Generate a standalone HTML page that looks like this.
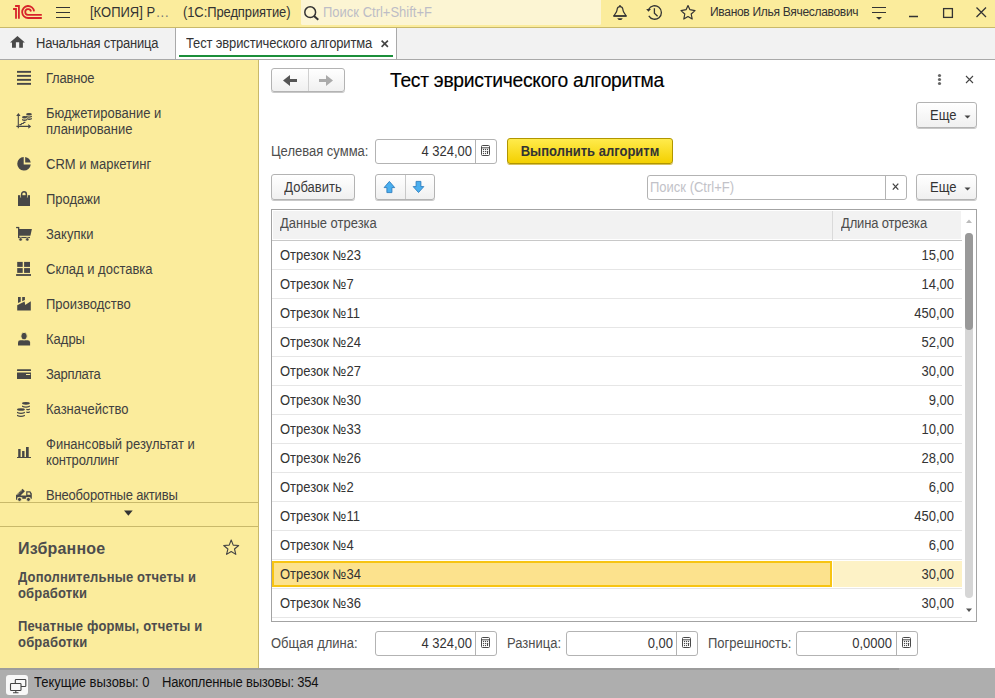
<!DOCTYPE html>
<html><head><meta charset="utf-8">
<style>
*{box-sizing:border-box}
html,body{margin:0;padding:0;width:995px;height:698px;overflow:hidden;background:#fff;font-family:"Liberation Sans",sans-serif;font-size:13px;color:#333}
.a{position:absolute}
.t{position:absolute;white-space:nowrap;font-size:13px;line-height:15px;transform:scaleY(1.07);transform-origin:0 12px}
svg{position:absolute;overflow:visible}
#hdr{left:0;top:0;width:995px;height:27px;background:#FBEC9C}
#hdrline{left:0;top:27px;width:995px;height:1px;background:#C9B96A}
#tabs{left:0;top:28px;width:995px;height:31px;background:#F2F2F2}
#tabsline{left:0;top:59px;width:995px;height:1px;background:#A9A9A9}
#left{left:0;top:60px;width:258px;height:608px;background:#FBEC9C}
#leftline{left:258px;top:60px;width:1px;height:608px;background:#C9B96A}
#status{left:0;top:668px;width:995px;height:30px;background:#AEAEAE}
.btn{position:absolute;border:1px solid #B3B3B3;border-radius:3px;background:linear-gradient(#FFFFFF,#F0F0F0);box-shadow:0 1px 0 #C8C8C8}
.inp{position:absolute;border:1px solid #B3B3B3;border-radius:3px;background:#fff}
.sec{position:absolute;left:46px;white-space:nowrap;font-size:13px;line-height:15px;color:#404040;transform:scaleY(1.07);transform-origin:0 12px}
.row{position:absolute;left:272px;width:690px;height:1px;background:#E6E6E6}
.rt{position:absolute;left:280px;white-space:nowrap;line-height:15px;color:#333;transform:scaleY(1.07);transform-origin:0 12px}
.rn{position:absolute;right:42px;white-space:nowrap;line-height:15px;color:#333;text-align:right;transform:scaleY(1.07);transform-origin:0 12px}
</style></head><body>
<!-- header -->
<div id="hdr" class="a"></div>
<div id="hdrline" class="a"></div>
<svg style="left:0;top:0" width="60" height="27" viewBox="0 0 60 27">
 <g fill="none" stroke="#D8232A" stroke-width="1.8">
  <path d="M13.1 9 H16 V18.8"/>
  <path d="M15.1 6 H18.9 V18.8"/>
  <path d="M34.1 11.3 A6 6 0 1 0 28.2 18 H41.8"/>
  <path d="M31 11.5 A2.9 2.9 0 1 0 28 14.9 H41.8"/>
 </g>
</svg>
<svg style="left:0;top:0" width="80" height="27" viewBox="0 0 80 27">
 <g stroke="#333" stroke-width="1.2"><path d="M56 7.5H70M56 12.5H70M56 17.5H70"/></g>
</svg>
<div class="t" style="left:90px;top:5px;color:#333">[КОПИЯ] Р<span style="color:#777;letter-spacing:0.8px;margin-left:1px">...</span></div>
<div class="t" style="left:183px;top:5px;color:#333;letter-spacing:-0.1px">(1С:Предприятие)</div>
<div class="a" style="left:301px;top:0;width:300px;height:25px;background:#FCF5D3;border-radius:0 0 1.5px 1.5px"></div>
<svg style="left:0;top:0" width="330" height="27" viewBox="0 0 330 27">
 <g fill="none" stroke="#333" stroke-width="1.5"><circle cx="310.2" cy="12.2" r="5.4"/><path d="M314 16 L318.3 19.8" stroke-width="2"/></g>
</svg>
<div class="t" style="left:323px;top:5px;color:#BDBDC6">Поиск Ctrl+Shift+F</div>

<!-- header right -->
<svg style="left:0;top:0" width="995" height="27" viewBox="0 0 995 27">
 <path d="M613.8 16 L616.3 12.2 C616.9 11.2 617.1 10 617.3 8.7 C617.5 7.3 618.5 6.6 620 6.6 C621.5 6.6 622.5 7.3 622.7 8.7 C622.9 10 623.1 11.2 623.7 12.2 L626.2 16 Z" fill="none" stroke="#333" stroke-width="1.2" stroke-linejoin="round"/><path d="M613.5 16 H626.5" stroke="#333" stroke-width="1.6"/>
 <circle cx="620" cy="5.9" r="0.9" fill="#333"/>
 <path d="M617.2 18.2 H622.8 L621.3 19.9 H618.7 Z" fill="#333"/>
 <g fill="none" stroke="#333" stroke-width="1.3">
  <path d="M648.7 9.3 A6.75 6.75 0 1 1 648.8 15.9"/>
  <path d="M654.4 8.2 V13.2 L657.6 16.2"/>
 </g>
 <path d="M646.2 8.9 H651 L648.4 11.8 Z" fill="#333"/>
 <path d="M688 5.5 L689.8 9.6 L695 10.6 L691.2 14 L692.2 19 L688 16.5 L683.8 19 L684.8 14 L681 10.6 L686.2 9.6 Z" fill="none" stroke="#333" stroke-width="1.2" stroke-linejoin="round"/>
 <g stroke="#333" stroke-width="1.2"><path d="M872 7.5H886M872 12.5H886"/></g>
 <path d="M876 17.1 H882 L879 19.8 Z" fill="#333"/>
 <path d="M909 16.5 H918" stroke="#333" stroke-width="1.5"/>
 <rect x="943.6" y="8.6" width="8.8" height="8.8" fill="none" stroke="#333" stroke-width="1.3"/>
 <path d="M976.5 7.5 L986 17 M986 7.5 L976.5 17" stroke="#333" stroke-width="1.3"/>
</svg>
<div class="t" style="left:710px;top:5px;font-size:12px;line-height:14px;transform:none;color:#333;letter-spacing:-0.3px">Иванов Илья Вячеславович</div>

<!-- tab bar -->
<div id="tabs" class="a"></div>
<div id="tabsline" class="a"></div>
<div class="a" style="left:175px;top:28px;width:1px;height:31px;background:#A9A9A9"></div>
<div class="a" style="left:176px;top:28px;width:220px;height:31px;background:#fff"></div>
<div class="a" style="left:396px;top:28px;width:1px;height:31px;background:#A9A9A9"></div>
<div class="a" style="left:179px;top:55px;width:214px;height:2px;background:#1B8E3A"></div>
<svg style="left:0;top:0" width="30" height="60" viewBox="0 0 30 60">
 <path d="M17.45 35.9 L24.9 42.6 H22.9 V47.8 H19.2 V42.3 H15.9 V47.8 H12 V42.6 H10 Z" fill="#4A4A4A"/>
</svg>
<div class="t" style="left:36px;top:36px;color:#333;letter-spacing:-0.19px">Начальная страница</div>
<div class="t" style="left:186px;top:36px;color:#333;letter-spacing:-0.14px">Тест эвристического алгоритма</div>
<svg style="left:0;top:0" width="400" height="60" viewBox="0 0 400 60">
 <path d="M381.6 40.6 L387.9 46.9 M387.9 40.6 L381.6 46.9" stroke="#444" stroke-width="1.6"/>
</svg>

<!-- left panel -->
<div id="left" class="a"></div>
<div id="leftline" class="a"></div>
<div class="a" style="left:0;top:502px;width:258px;height:1px;background:#C9B96A"></div>
<div class="a" style="left:0;top:526px;width:258px;height:1px;background:#C9B96A"></div>
<svg style="left:0;top:0" width="258" height="668" viewBox="0 0 258 668">
 <path d="M124 510.5 H132.7 L128.35 515.7 Z" fill="#333"/>
</svg>

<svg style="left:0;top:0" width="258" height="668" viewBox="0 0 258 668">
 <g fill="#474747">
  <rect x="17" y="70.9" width="14" height="1.9"/><rect x="17" y="74.9" width="14" height="1.9"/><rect x="17" y="78.9" width="14" height="1.9"/><rect x="17" y="82.9" width="14" height="1.9"/>
 </g>
 <g fill="none" stroke="#474747" stroke-width="1.1">
  <path d="M18.3 114.5 V128.2 M16.4 126.4 H30"/>
  <path d="M19.4 124.7 H21 L21.8 123.5 H23.2 L24 122.3 H25.4" stroke-width="1.2"/>
 </g>
 <g fill="#474747">
  <path d="M18.4 113 L16.2 115.9 H20.6 Z"/><path d="M31.1 126.4 L28.3 124.1 V128.7 Z"/>
  <ellipse cx="29" cy="114.3" rx="2.9" ry="1.25"/>
  <path d="M26.1 115.8 Q29 117.3 31.9 115.8 V117.1 Q29 118.6 26.1 117.1 Z"/>
  <path d="M26.9 118 Q29 119.2 31.9 118 V119.3 Q29 120.5 26.9 119.3 Z"/>
  <ellipse cx="24.5" cy="117.3" rx="2.5" ry="1.2"/>
  <path d="M22 118.9 Q24.5 120.3 27 118.9 V120.2 Q24.5 121.6 22 120.2 Z"/>
 </g>
 <g fill="#474747">
  <path d="M23.7 164.6 V157 A6.8 6.8 0 1 0 30.8 164.6 Z"/>
  <path d="M25.2 162.6 V157.1 A6.8 6.8 0 0 1 30.74 162.6 Z"/>
 </g>
 <path d="M18 195.2 H30 V206 H18 Z" fill="#474747"/><path d="M20.6 195 V197.5 M27.4 195 V197.5" stroke="#FBEC9C" stroke-width="0.8"/>
 <path d="M21.65 197 V194.2 A2.35 2.35 0 0 1 26.35 194.2 V197" fill="none" stroke="#474747" stroke-width="1.5"/>
 <g fill="#474747">
  <rect x="16.1" y="226.9" width="2.9" height="1.3"/><rect x="18" y="227" width="1.3" height="11.1"/>
  <path d="M18 229 H31.9 L30.4 235.7 H18 Z"/><rect x="18" y="236.9" width="12" height="1.2"/>
  <circle cx="20.6" cy="239.4" r="1.7" stroke="#FBEC9C" stroke-width="0.6"/><circle cx="27.3" cy="239.4" r="1.7" stroke="#FBEC9C" stroke-width="0.6"/>
 </g>
 <g fill="#474747">
  <rect x="17.2" y="261.9" width="5.5" height="5"/><rect x="24.1" y="261.9" width="5.9" height="5"/>
  <rect x="17.2" y="268.1" width="5.5" height="4.8"/><rect x="24.1" y="268.1" width="5.9" height="4.8"/>
  <rect x="16.1" y="274.1" width="14.9" height="1.8"/>
 </g>
 <path d="M17.2 310.6 V305.2 L24.6 301.4 L25.2 305 L30.8 301.3 V310.6 Z M18 297 H20.7 V301.7 L18 303 Z M22.2 297 H24.9 V299.9 L22.2 301.2 Z" fill="#474747"/>
 <g fill="#474747">
  <path d="M18 345.6 V342.6 Q18 340.3 20.4 340.3 H27.7 Q30.1 340.3 30.1 342.6 V345.6 Z"/>
  <ellipse cx="24.05" cy="336.1" rx="3.2" ry="3.8" stroke="#FBEC9C" stroke-width="0.9"/>
 </g>
 <rect x="17" y="369.2" width="14" height="1.7" rx="0.5" fill="#474747"/><path d="M17 372.6 H31 V379 H17 Z M26 373.9 V375.1 H30.2 V373.9 Z" fill="#474747" fill-rule="evenodd"/>
 <g fill="#474747">
  <ellipse cx="25.95" cy="403.35" rx="3.95" ry="1.3"/>
  <path d="M22 405.6 Q25.95 407.6 29.9 405.6 V406.8 Q25.95 408.8 22 406.8 Z"/>
  <path d="M26.3 408.7 Q28.1 409.3 29.9 408.4 V409.7 Q28.1 410.6 26.3 410 Z"/>
  <path d="M26.3 411.5 Q28.1 412.1 29.9 411.2 V412.5 Q28.1 413.4 26.3 412.8 Z"/>
  <ellipse cx="20.95" cy="409.4" rx="3.95" ry="1.25"/>
  <path d="M17 411.8 Q20.95 413.8 24.9 411.8 V413 Q20.95 415 17 413 Z"/>
  <path d="M17 414.8 Q20.95 416.8 24.9 414.8 V416 Q20.95 418 17 416 Z"/>
 </g>
 <g fill="#474747">
  <rect x="18.2" y="449" width="2.4" height="8"/><rect x="22.1" y="451" width="2.4" height="6"/><rect x="26" y="447" width="2.7" height="10"/>
  <rect x="17" y="457" width="14" height="1"/>
 </g>
 <g fill="#474747">
  <path d="M16 499.7 V495.3 L22.6 488.7 L24.9 491.3 L20.5 495.6 H26.2 V491.2 H30.3 L31.8 493.6 V498.8 H30.4 V497.3 H17.4 V499.7 Z"/>
  <path d="M27.4 492.4 H29.7 L30.6 494.8 H27.4 Z" fill="#FBEC9C"/>
  <path d="M17.4 494.9 L22.4 489.9" stroke="#FBEC9C" stroke-width="0.8" stroke-dasharray="0.9 0.8"/>
  <rect x="22.3" y="497" width="3.6" height="1.8"/>
  <circle cx="19.5" cy="499.4" r="2" stroke="#FBEC9C" stroke-width="0.8"/><circle cx="28.4" cy="499.4" r="2" stroke="#FBEC9C" stroke-width="0.8"/>
 </g>
</svg>

<div class="sec" style="top:71px;letter-spacing:-0.2px">Главное</div>
<div class="sec" style="top:106px">Бюджетирование и</div><div class="sec" style="top:122px">планирование</div>
<div class="sec" style="top:157px">CRM и маркетинг</div>
<div class="sec" style="top:192px">Продажи</div>
<div class="sec" style="top:227px">Закупки</div>
<div class="sec" style="top:262px">Склад и доставка</div>
<div class="sec" style="top:297px">Производство</div>
<div class="sec" style="top:332px">Кадры</div>
<div class="sec" style="top:367px;letter-spacing:-0.3px">Зарплата</div>
<div class="sec" style="top:402px">Казначейство</div>
<div class="sec" style="top:437px">Финансовый результат и</div><div class="sec" style="top:453px;letter-spacing:-0.15px">контроллинг</div>
<div class="a" style="left:0;top:488px;width:258px;height:14px;overflow:hidden"><div class="sec" style="top:0px;letter-spacing:-0.18px">Внеоборотные активы</div></div>
<div class="t" style="left:18px;top:539px;font-size:16px;line-height:19px;transform:none;font-weight:bold;color:#4D4D4D;letter-spacing:0.2px">Избранное</div>
<div class="t" style="left:18px;top:570px;font-weight:bold;color:#4D4D4D;letter-spacing:0.17px">Дополнительные отчеты и</div><div class="t" style="left:18px;top:586px;font-weight:bold;color:#4D4D4D;letter-spacing:0.17px">обработки</div>
<div class="t" style="left:18px;top:619px;font-weight:bold;color:#4D4D4D;letter-spacing:0.2px">Печатные формы, отчеты и</div><div class="t" style="left:18px;top:635px;font-weight:bold;color:#4D4D4D;letter-spacing:0.2px">обработки</div>
<svg style="left:0;top:0" width="258" height="668" viewBox="0 0 258 668">
 <path d="M231.2 540 L233.2 545.1 L238.7 545.5 L234.5 549 L235.8 554.4 L231.2 551.5 L226.6 554.4 L227.9 549 L223.7 545.5 L229.2 545.1 Z" fill="none" stroke="#444" stroke-width="1.1" stroke-linejoin="round"/>
</svg>


<!-- content -->
<div class="btn" style="left:271px;top:68px;width:74px;height:24px"></div>
<div class="a" style="left:308px;top:69px;width:1px;height:22px;background:#D0D0D0"></div>
<svg style="left:0;top:0" width="995" height="698" viewBox="0 0 995 698">
 <path d="M283 80.5 L290 75 V79 H297 V82 H290 V86 Z" fill="#555"/>
 <path d="M333 80.5 L326 75 V79 H319 V82 H326 V86 Z" fill="#AAA"/>
 <g fill="#666"><circle cx="939.5" cy="75.5" r="1.6"/><circle cx="939.5" cy="79.5" r="1.6"/><circle cx="939.5" cy="83.5" r="1.6"/></g>
 <path d="M966 76 L973 83 M973 76 L966 83" stroke="#444" stroke-width="1.1"/>
</svg>
<div class="t" style="left:390px;top:70px;font-size:19.3px;line-height:21px;transform:none;color:#000;letter-spacing:-0.28px;-webkit-text-stroke:0.15px #000">Тест эвристического алгоритма</div>

<div class="btn" style="left:916px;top:102px;width:61px;height:26px"></div>
<div class="t" style="left:930px;top:108px;color:#333">Еще</div>


<div class="t" style="left:271px;top:144px;color:#4D4D4D">Целевая сумма:</div>
<div class="inp" style="left:375px;top:139px;width:122px;height:25px"></div>
<div class="a" style="left:475px;top:140px;width:1px;height:23px;background:#B3B3B3"></div>
<div class="t" style="left:375px;top:144px;width:97px;text-align:right;color:#333">4 324,00</div>
<svg style="left:0;top:0" width="995" height="698" viewBox="0 0 995 698"><g transform="translate(480.5,145)"><rect x="1" y="0.5" width="8" height="10" rx="1" fill="none" stroke="#4A4A4A" stroke-width="1"/><path d="M1 2.8 H9" stroke="#4A4A4A" stroke-width="1"/><g fill="#4A4A4A"><circle cx="3" cy="4.4" r="0.65"/><circle cx="5" cy="4.4" r="0.65"/><circle cx="7" cy="4.4" r="0.65"/><circle cx="3" cy="6.4" r="0.65"/><circle cx="5" cy="6.4" r="0.65"/><circle cx="3" cy="8.5" r="0.65"/><circle cx="5" cy="8.5" r="0.65"/><rect x="6.45" y="5.8" width="1.1" height="3.3" rx="0.55"/></g></g></svg>
<div class="a" style="left:507px;top:138px;width:166px;height:26px;border:1px solid #B09600;border-radius:3px;background:linear-gradient(#FFEB4C,#F3D000);box-shadow:0 1px 0 #D6C160"></div>
<div class="t" style="left:507px;top:144px;width:166px;text-align:center;font-weight:bold;color:#333">Выполнить алгоритм</div>

<div class="btn" style="left:271px;top:174px;width:84px;height:26px"></div>
<div class="t" style="left:271px;top:180px;width:84px;text-align:center;color:#3A3A3A">Добавить</div>
<div class="btn" style="left:375px;top:174px;width:60px;height:26px"></div>
<div class="a" style="left:405px;top:175px;width:1px;height:24px;background:#C8C8C8"></div>
<svg style="left:0;top:0" width="995" height="698" viewBox="0 0 995 698">
 <path d="M389.4 181.4 L394.7 187.6 H391.9 V192.6 H386.9 V187.6 H384.1 Z" fill="#4AAFEF" stroke="#2E7EBF" stroke-width="0.9" stroke-linejoin="miter"/>
 <path d="M418.5 192.5 L423.8 186.6 H420.9 V181.4 H416.1 V186.6 H413.2 Z" fill="#4AAFEF" stroke="#2E7EBF" stroke-width="0.9"/>
</svg>
<div class="inp" style="left:647px;top:175px;width:260px;height:25px"></div>
<div class="a" style="left:885px;top:176px;width:1px;height:23px;background:#B3B3B3"></div>
<div class="t" style="left:650px;top:180px;color:#C2C2C8">Поиск (Ctrl+F)</div>
<svg style="left:0;top:0" width="995" height="698" viewBox="0 0 995 698"><path d="M892.8 183.6 L898.3 189.6 M898.3 183.6 L892.8 189.6" stroke="#444" stroke-width="1.3"/></svg>
<div class="btn" style="left:916px;top:174px;width:61px;height:26px"></div>
<div class="t" style="left:930px;top:180px;color:#333">Еще</div>
<svg style="left:0;top:0" width="995" height="698" viewBox="0 0 995 698"><path d="M964.5 115.5 H970.5 L967.5 118.5 Z" fill="#444"/><path d="M964.5 187.5 H970.5 L967.5 190.5 Z" fill="#444"/></svg>

<!-- table -->
<div class="a" style="left:271px;top:209px;width:706px;height:413px;border:1px solid #A3A3A3"></div>
<div class="a" style="left:273px;top:211px;width:559px;height:28px;background:#F2F2F2"></div>
<div class="a" style="left:832px;top:211px;width:1px;height:29px;background:#DADADA"></div>
<div class="a" style="left:833px;top:211px;width:128px;height:28px;background:#F2F2F2"></div>
<div class="a" style="left:272px;top:240px;width:690px;height:1px;background:#C8C8C8"></div>
<div class="t" style="left:280px;top:216px;color:#4D4D4D">Данные отрезка</div>
<div class="t" style="left:841px;top:216px;color:#4D4D4D;letter-spacing:-0.15px">Длина отрезка</div>
<div class="row" style="top:269px"></div>
<div class="rt" style="top:248px">Отрезок №23</div>
<div class="rn" style="top:248px;right:41px">15,00</div>
<div class="row" style="top:298px"></div>
<div class="rt" style="top:277px">Отрезок №7</div>
<div class="rn" style="top:277px;right:41px">14,00</div>
<div class="row" style="top:327px"></div>
<div class="rt" style="top:306px">Отрезок №11</div>
<div class="rn" style="top:306px;right:41px">450,00</div>
<div class="row" style="top:356px"></div>
<div class="rt" style="top:335px">Отрезок №24</div>
<div class="rn" style="top:335px;right:41px">52,00</div>
<div class="row" style="top:385px"></div>
<div class="rt" style="top:364px">Отрезок №27</div>
<div class="rn" style="top:364px;right:41px">30,00</div>
<div class="row" style="top:414px"></div>
<div class="rt" style="top:393px">Отрезок №30</div>
<div class="rn" style="top:393px;right:41px">9,00</div>
<div class="row" style="top:443px"></div>
<div class="rt" style="top:422px">Отрезок №33</div>
<div class="rn" style="top:422px;right:41px">10,00</div>
<div class="row" style="top:472px"></div>
<div class="rt" style="top:451px">Отрезок №26</div>
<div class="rn" style="top:451px;right:41px">28,00</div>
<div class="row" style="top:501px"></div>
<div class="rt" style="top:480px">Отрезок №2</div>
<div class="rn" style="top:480px;right:41px">6,00</div>
<div class="row" style="top:530px"></div>
<div class="rt" style="top:509px">Отрезок №11</div>
<div class="rn" style="top:509px;right:41px">450,00</div>
<div class="row" style="top:559px"></div>
<div class="rt" style="top:538px">Отрезок №4</div>
<div class="rn" style="top:538px;right:41px">6,00</div>
<div class="a" style="left:272px;top:561px;width:560px;height:26px;background:#FCE28D;border:2px solid #F7C412"></div>
<div class="a" style="left:833px;top:561px;width:129px;height:26px;background:#FDF2C6"></div>
<div class="row" style="top:588px"></div>
<div class="rt" style="top:567px">Отрезок №34</div>
<div class="rn" style="top:567px;right:41px">30,00</div>
<div class="row" style="top:617px"></div>
<div class="rt" style="top:596px">Отрезок №36</div>
<div class="rn" style="top:596px;right:41px">30,00</div>

<div class="a" style="left:965px;top:233px;width:8px;height:365px;background:#D6D6D6;border-radius:4px"></div>
<div class="a" style="left:965px;top:233px;width:8px;height:97px;background:#999;border-radius:4px"></div>
<svg style="left:0;top:0" width="995" height="698" viewBox="0 0 995 698">
 <path d="M966 223 H972 L969 219.5 Z" fill="#BBB"/>
 <path d="M966 608.5 H972 L969 612 Z" fill="#555"/>
</svg>

<!-- bottom fields -->
<div class="t" style="left:271px;top:636px;color:#4D4D4D">Общая длина:</div>
<div class="inp" style="left:375px;top:631px;width:122px;height:25px"></div>
<div class="a" style="left:475px;top:632px;width:1px;height:23px;background:#B3B3B3"></div>
<div class="t" style="left:375px;top:636px;width:97px;text-align:right;color:#333">4 324,00</div>
<svg style="left:0;top:0" width="995" height="698" viewBox="0 0 995 698"><g transform="translate(480.5,637)"><rect x="1" y="0.5" width="8" height="10" rx="1" fill="none" stroke="#4A4A4A" stroke-width="1"/><path d="M1 2.8 H9" stroke="#4A4A4A" stroke-width="1"/><g fill="#4A4A4A"><circle cx="3" cy="4.4" r="0.65"/><circle cx="5" cy="4.4" r="0.65"/><circle cx="7" cy="4.4" r="0.65"/><circle cx="3" cy="6.4" r="0.65"/><circle cx="5" cy="6.4" r="0.65"/><circle cx="3" cy="8.5" r="0.65"/><circle cx="5" cy="8.5" r="0.65"/><rect x="6.45" y="5.8" width="1.1" height="3.3" rx="0.55"/></g></g></svg>
<div class="t" style="left:507px;top:636px;color:#4D4D4D">Разница:</div>
<div class="inp" style="left:566px;top:631px;width:132px;height:25px"></div>
<div class="a" style="left:676px;top:632px;width:1px;height:23px;background:#B3B3B3"></div>
<div class="t" style="left:566px;top:636px;width:107px;text-align:right;color:#333">0,00</div>
<svg style="left:0;top:0" width="995" height="698" viewBox="0 0 995 698"><g transform="translate(681.5,637)"><rect x="1" y="0.5" width="8" height="10" rx="1" fill="none" stroke="#4A4A4A" stroke-width="1"/><path d="M1 2.8 H9" stroke="#4A4A4A" stroke-width="1"/><g fill="#4A4A4A"><circle cx="3" cy="4.4" r="0.65"/><circle cx="5" cy="4.4" r="0.65"/><circle cx="7" cy="4.4" r="0.65"/><circle cx="3" cy="6.4" r="0.65"/><circle cx="5" cy="6.4" r="0.65"/><circle cx="3" cy="8.5" r="0.65"/><circle cx="5" cy="8.5" r="0.65"/><rect x="6.45" y="5.8" width="1.1" height="3.3" rx="0.55"/></g></g></svg>
<div class="t" style="left:708px;top:636px;color:#4D4D4D">Погрешность:</div>
<div class="inp" style="left:796px;top:631px;width:122px;height:25px"></div>
<div class="a" style="left:896px;top:632px;width:1px;height:23px;background:#B3B3B3"></div>
<div class="t" style="left:796px;top:636px;width:96px;text-align:right;color:#333">0,0000</div>
<svg style="left:0;top:0" width="995" height="698" viewBox="0 0 995 698"><g transform="translate(901.5,637)"><rect x="1" y="0.5" width="8" height="10" rx="1" fill="none" stroke="#4A4A4A" stroke-width="1"/><path d="M1 2.8 H9" stroke="#4A4A4A" stroke-width="1"/><g fill="#4A4A4A"><circle cx="3" cy="4.4" r="0.65"/><circle cx="5" cy="4.4" r="0.65"/><circle cx="7" cy="4.4" r="0.65"/><circle cx="3" cy="6.4" r="0.65"/><circle cx="5" cy="6.4" r="0.65"/><circle cx="3" cy="8.5" r="0.65"/><circle cx="5" cy="8.5" r="0.65"/><rect x="6.45" y="5.8" width="1.1" height="3.3" rx="0.55"/></g></g></svg>

<!-- status bar -->
<div id="status" class="a"></div>
<div class="a" style="left:0;top:668px;width:899px;height:2px;background:#9C9C9C"></div>
<div class="a" style="left:6px;top:675px;width:22px;height:20px;background:#F8F8F8;border-radius:3px"></div>
<svg style="left:0;top:0" width="40" height="698" viewBox="0 0 40 698">
 <g fill="none" stroke="#444" stroke-width="1.1">
  <rect x="15.3" y="679.5" width="10.5" height="7" rx="0.8" fill="#F8F8F8"/>
  <rect x="10.5" y="683.5" width="10.5" height="7" rx="0.8" fill="#F8F8F8"/>
  <path d="M15.8 690.8 V692.5 M13 692.7 H18.5"/>
 </g>
</svg>
<div class="t" style="left:34px;top:675px;color:#111">Текущие вызовы: 0</div>
<div class="t" style="left:162px;top:675px;color:#111;letter-spacing:-0.18px">Накопленные вызовы: 354</div>
</body></html>
